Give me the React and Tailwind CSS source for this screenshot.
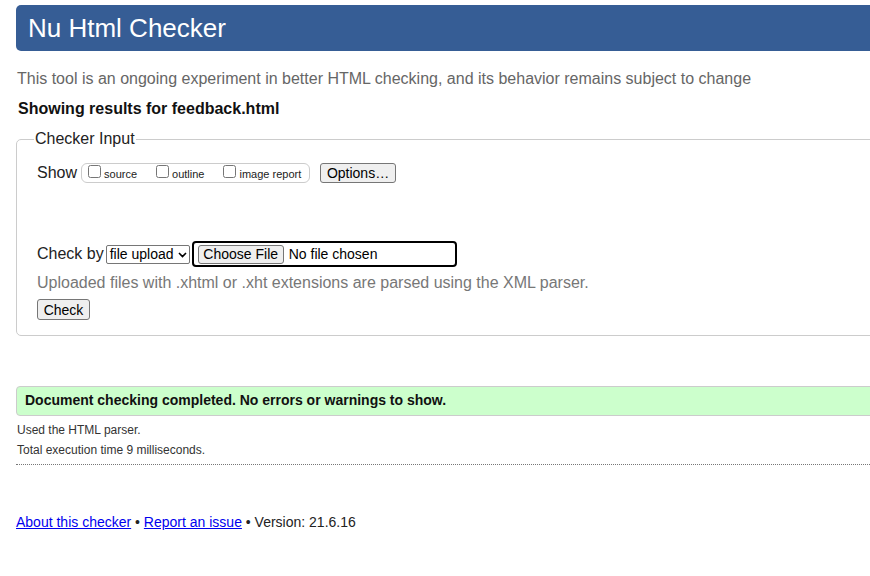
const btn =
  'bg-[#efefef] border border-[#767676] rounded-[3px] text-[14px] leading-[16px] text-black';

const App = () => {
  return (
    <div className="w-[870px] h-[576px] overflow-hidden bg-white font-['Liberation_Sans',Arial,sans-serif] text-[#222]">
      <div className="w-[1100px] pl-[16px] pt-[5px]">
        <h1 className="h-[46px] bg-[#365d95] rounded-[5px] pl-[12px] flex items-center text-white text-[26px] leading-[30px]">
          Nu Html Checker
        </h1>

        <p className="mt-[19px] ml-[1px] text-[16px] leading-[18px] text-[#666]">
          This tool is an ongoing experiment in better HTML checking, and its behavior remains subject to change
        </p>
        <p className="mt-[12px] ml-[2px] text-[16px] leading-[18px] font-bold text-[#111]">
          Showing results for feedback.html
        </p>

        <fieldset className="mt-[12px] border border-[#ccc] rounded-[5px] pl-[20px] pb-[13px]">
          <legend className="-ml-[3px] px-[1px] text-[16px] leading-[18px] text-[#222]">Checker Input</legend>

          <div className="mt-[15px] flex items-center h-[20px]">
            <span className="text-[16px] leading-[18px] mr-[4px]">Show</span>
            <div className="h-[20px] w-[229px] border border-[#ccc] rounded-[6px] flex items-center pl-[6px] text-[11px] text-[#222]">
              <label className="flex items-center mr-[19px]">
                <input type="checkbox" className="w-[13px] h-[13px] m-0 mr-[3px] -mt-[3px]" />
                <span className="mt-[3px]">source</span>
              </label>
              <label className="flex items-center mr-[19px]">
                <input type="checkbox" className="w-[13px] h-[13px] m-0 mr-[3px] -mt-[3px]" />
                <span className="mt-[3px]">outline</span>
              </label>
              <label className="flex items-center">
                <input type="checkbox" className="w-[13px] h-[13px] m-0 mr-[3px] -mt-[3px]" />
                <span className="mt-[3px]">image report</span>
              </label>
            </div>
            <button className={`${btn} ml-[10px] h-[20px] w-[76px]`}>Options…</button>
          </div>

          <div className="mt-[58px] flex items-center h-[26px]">
            <span className="text-[16px] leading-[18px] mr-[2px]">Check by</span>
            <div className="h-[19px] w-[84px] border border-[#767676] rounded-[2px] text-[14px] leading-[16px] text-black bg-white pl-[3px] pr-[2px] flex items-center justify-between">
              <span>file upload</span>
              <svg width="9" height="6" viewBox="0 0 9 6" className="mt-[1px]">
                <path d="M1 1 L4.5 4.5 L8 1" fill="none" stroke="black" strokeWidth="1.6" />
              </svg>
            </div>
            <div className="ml-[2px] h-[26px] w-[265px] border-2 border-black rounded-[4px] flex items-center pl-[4px] text-[14px] text-black">
              <span className={`${btn} h-[19px] w-[86px] flex items-center justify-center rounded-[2px]`}>Choose File</span>
              <span className="ml-[5px]">No file chosen</span>
            </div>
          </div>

          <p className="mt-[7px] text-[16px] leading-[18px] text-[#777]">
            Uploaded files with .xhtml or .xht extensions are parsed using the XML parser.
          </p>

          <button className={`${btn} mt-[7px] h-[21px] w-[53px] rounded-[2px]`}>Check</button>
        </fieldset>

        <div className="mt-[50px] h-[30px] bg-[#ccffcc] border border-[#ccc] rounded-[4px] flex items-center pl-[8px] text-[14px] font-bold text-[#111]">
          Document checking completed. No errors or warnings to show.
        </div>

        <p className="mt-[4px] ml-[1px] text-[12px] leading-[20px] text-[#333]">Used the HTML parser.</p>
        <p className="ml-[1px] text-[12px] leading-[20px] text-[#333]">Total execution time 9 milliseconds.</p>
        <div className="mt-[4px] border-t border-dotted border-[#777]"></div>

        <p className="mt-[49px] text-[14px] leading-[16px] text-[#222]">
          <a href="#" className="text-[#0000ee] underline">About this checker</a>
          {' • '}
          <a href="#" className="text-[#0000ee] underline">Report an issue</a>
          {' • Version: 21.6.16'}
        </p>
      </div>
    </div>
  );
};

export default App;
